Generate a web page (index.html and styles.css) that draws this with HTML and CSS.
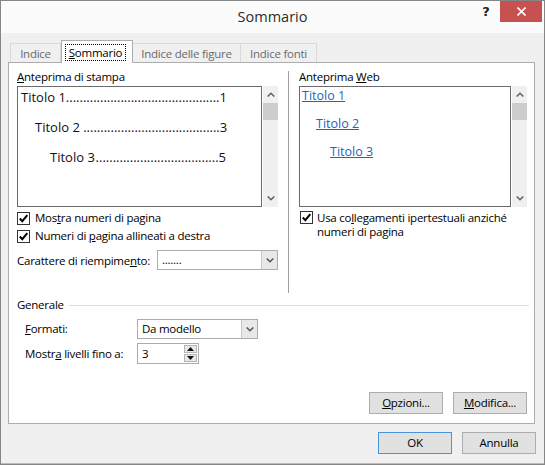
FILE: index.html
```html
<!DOCTYPE html>
<html lang="it">
<head>
<meta charset="utf-8">
<title>Sommario</title>
<link rel="stylesheet" href="styles.css">
</head>
<body>
<div class="window">
  <div class="titlebar">
    <div></div>
    <div class="title">Sommario</div>
    <div class="controls">
      <span class="help">?</span>
      <span class="close"><svg width="9" height="9" viewBox="0 0 9 9"><path d="M0.5 0.5 L8.5 8.5 M8.5 0.5 L0.5 8.5" stroke="#fff" stroke-width="1.6" fill="none"/></svg></span>
    </div>
  </div>
  <div class="client">
    <div class="tabs">
      <div class="tab t-indice">Indice</div>
      <div class="tab t-sommario active"><span class="focus"><u>S</u>ommario</span></div>
      <div class="tab t-figure">Indice delle figure</div>
      <div class="tab t-fonti">Indice fonti</div>
    </div>
    <div class="panel">
      <div class="top">
        <div class="col left">
          <div class="label"><u>A</u>nteprima di stampa</div>
          <div class="preview">
            <div class="list print">
              <div class="toc"><span>Titolo 1</span><span class="dots">.............................................</span><span>1</span></div>
              <div class="toc lv2"><span>Titolo 2&nbsp;</span><span class="dots">........................................</span><span>3</span></div>
              <div class="toc lv3"><span>Titolo 3</span><span class="dots">....................................</span><span>5</span></div>
            </div>
            <div class="scrollbar">
              <span class="sb-btn"><svg width="8" height="5" viewBox="0 0 8 5"><polyline points="0.7,4.5 4,1.2 7.3,4.5" fill="none" stroke="#606060" stroke-width="1.5"/></svg></span>
              <span class="sb-thumb"></span>
              <span class="sb-track"></span>
              <span class="sb-btn"><svg width="8" height="5" viewBox="0 0 8 5"><polyline points="0.7,0.5 4,3.8 7.3,0.5" fill="none" stroke="#606060" stroke-width="1.5"/></svg></span>
            </div>
          </div>
          <div class="check first">
            <span class="box"><svg width="11" height="11" viewBox="0 0 11 11"><polyline points="1.8,5.5 4.3,8.2 9.3,2.2" fill="none" stroke="#000" stroke-width="2"/></svg></span>
            <span>Mos<u>t</u>ra numeri di pagina</span>
          </div>
          <div class="check">
            <span class="box"><svg width="11" height="11" viewBox="0 0 11 11"><polyline points="1.8,5.5 4.3,8.2 9.3,2.2" fill="none" stroke="#000" stroke-width="2"/></svg></span>
            <span>Numeri di <u>p</u>agina allineati a destra</span>
          </div>
          <div class="fill-row">
            <span>Carattere di riempime<u>n</u>to:</span>
            <div class="combo">
              <span class="combo-val">.......</span>
              <span class="combo-btn"><svg width="8" height="5" viewBox="0 0 8 5"><polyline points="0.7,0.5 4,3.8 7.3,0.5" fill="none" stroke="#555" stroke-width="1.5"/></svg></span>
            </div>
          </div>
        </div>
        <div class="vsep"></div>
        <div class="col right">
          <div class="label">Anteprima <u>W</u>eb</div>
          <div class="preview">
            <div class="list web">
              <a class="link">Titolo 1</a>
              <a class="link lv2">Titolo 2</a>
              <a class="link lv3">Titolo 3</a>
            </div>
            <div class="scrollbar">
              <span class="sb-btn"><svg width="8" height="5" viewBox="0 0 8 5"><polyline points="0.7,4.5 4,1.2 7.3,4.5" fill="none" stroke="#606060" stroke-width="1.5"/></svg></span>
              <span class="sb-thumb"></span>
              <span class="sb-track"></span>
              <span class="sb-btn"><svg width="8" height="5" viewBox="0 0 8 5"><polyline points="0.7,0.5 4,3.8 7.3,0.5" fill="none" stroke="#606060" stroke-width="1.5"/></svg></span>
            </div>
          </div>
          <div class="check wrap">
            <span class="box"><svg width="11" height="11" viewBox="0 0 11 11"><polyline points="1.8,5.5 4.3,8.2 9.3,2.2" fill="none" stroke="#000" stroke-width="2"/></svg></span>
            <span>Usa co<u>l</u>legamenti ipertestuali anziché<br>numeri di pagina</span>
          </div>
        </div>
      </div>
      <div class="general">
        <div class="group-title"><span>Generale</span><span class="rule"></span></div>
        <div class="fields">
          <span class="flabel"><u>F</u>ormati:</span>
          <div class="combo">
            <span class="combo-val">Da modello</span>
            <span class="combo-btn"><svg width="8" height="5" viewBox="0 0 8 5"><polyline points="0.7,0.5 4,3.8 7.3,0.5" fill="none" stroke="#555" stroke-width="1.5"/></svg></span>
          </div>
          <span class="flabel">Mostr<u>a</u> livelli fino a:</span>
          <div class="spin">
            <span class="spin-val">3</span>
            <span class="spin-btns">
              <span class="spin-b"><svg width="7" height="4" viewBox="0 0 7 4"><polygon points="3.5,0 7,4 0,4" fill="#111"/></svg></span>
              <span class="spin-b"><svg width="7" height="4" viewBox="0 0 7 4"><polygon points="0,0 7,0 3.5,4" fill="#111"/></svg></span>
            </span>
          </div>
        </div>
      </div>
      <div class="panel-buttons">
        <button class="btn"><u>O</u>pzioni...</button>
        <button class="btn"><u>M</u>odifica...</button>
      </div>
    </div>
    <div class="footer">
      <button class="btn default">OK</button>
      <button class="btn">Annulla</button>
    </div>
  </div>
</div>
</body>
</html>
```

FILE: styles.css
```css
* { box-sizing: border-box; }
html, body { margin: 0; padding: 0; }
body {
  width: 545px;
  height: 465px;
  font-family: "Open Sans", "Noto Sans", sans-serif;
  font-size: 11.5px;
  letter-spacing: -0.25px;
  color: #000;
  background: #f0f0f0;
}
u { text-decoration: underline; text-underline-offset: 1px; }

.window {
  width: 545px;
  height: 465px;
  border: 1px solid #858585;
  background: #f0f0f0;
  display: flex;
  flex-direction: column;
  box-shadow: inset 0 -1px 0 #bcbcbc;
}

/* title bar */
.titlebar {
  height: 32px;
  background: #fbfbfb;
  display: grid;
  grid-template-columns: 1fr auto 1fr;
}
.title {
  font-size: 14.5px;
  letter-spacing: 0;
  color: #2b2b2b;
  line-height: 32px;
}
.controls {
  justify-self: end;
  display: flex;
  align-items: flex-start;
}
.help {
  width: 22px;
  height: 21px;
  margin-right: 3px;
  font-family: "DejaVu Sans", sans-serif;
  font-weight: bold;
  font-size: 13px;
  color: #222;
  line-height: 22px;
  text-align: center;
}
.close {
  width: 42px;
  height: 21px;
  margin-right: 2px;
  background: #c75050;
  display: flex;
  align-items: center;
  justify-content: center;
}

/* client */
.client {
  flex: 1;
  padding: 7px 9px 0 7px;
  display: flex;
  flex-direction: column;
}
.tabs {
  height: 22px;
  padding-left: 2px;
  display: flex;
  align-items: flex-end;
}
.tab {
  height: 19px;
  border: 1px solid #d9d9d9;
  border-bottom: 0;
  color: #6a6a6a;
  line-height: 17px;
  display: flex;
  justify-content: center;
  align-items: center;
  white-space: nowrap;
}
.t-indice { width: 51px; }
.t-sommario { width: 72px; }
.t-figure { width: 108px; border-left: 0; }
.t-fonti { width: 76px; border-left: 0; }
.tab.active {
  height: 23px;
  margin-bottom: -1px;
  background: #fff;
  border-color: #adadad;
  color: #000;
  position: relative;
  z-index: 1;
  align-items: flex-start;
  padding-top: 3px;
  padding-right: 3px;
}
.focus {
  border: 1px dotted #000;
  height: 17px;
  line-height: 15px;
  padding: 0 3px;
}

/* panel */
.panel {
  height: 362px;
  background: #fff;
  border: 1px solid #adadad;
  display: flex;
  flex-direction: column;
}
.top {
  height: 230px;
  display: grid;
  grid-template-columns: 279px 1px 1fr;
}
.col.left { padding: 6px 10px 0 8px; }
.col.right { padding: 6px 5px 0 10px; }
.vsep {
  background: #a0a0a0;
  margin-top: 8px;
}
.label {
  height: 16px;
  line-height: 16px;
  margin-bottom: 1px;
}
.preview {
  display: flex;
  gap: 1px;
  height: 121px;
}
.list {
  height: 121px;
  border: 1px solid #6b6b6b;
  background: #fff;
}
.list.print {
  width: 245px;
  padding: 0 35px 0 3px;
  font-size: 13px;
  letter-spacing: 0;
  color: #111;
}
.toc {
  display: flex;
  line-height: 20px;
  margin-bottom: 10px;
  white-space: nowrap;
}
.toc .dots {
  margin-left: auto;
}
.toc.lv2 { padding-left: 14px; }
.toc.lv3 { padding-left: 29px; }

.list.web {
  width: 212px;
  padding: 0 0 0 2px;
  display: flex;
  flex-direction: column;
  align-items: flex-start;
  gap: 10px;
  font-size: 12.5px;
  letter-spacing: 0;
}
.link {
  color: #1f64bd;
  text-decoration: underline;
  line-height: 18px;
}
.link.lv2 { margin-left: 14px; }
.link.lv3 { margin-left: 28px; }

.scrollbar {
  width: 15px;
  height: 121px;
  background: #f0f0f0;
  display: flex;
  flex-direction: column;
}
.sb-btn {
  height: 17px;
  display: flex;
  align-items: center;
  justify-content: center;
}
.sb-thumb {
  height: 17px;
  background: #cdcdcd;
}
.sb-track { flex: 1; }

/* checkboxes */
.check {
  display: flex;
  align-items: center;
  gap: 5px;
  height: 18px;
  line-height: 18px;
  white-space: nowrap;
}
.check.first { margin-top: 2px; }
.check.wrap {
  margin-top: 4px;
  height: auto;
  line-height: 14px;
  align-items: flex-start;
  padding-left: 1px;
  gap: 4px;
}
.box {
  width: 13px;
  height: 13px;
  border: 1px solid #333;
  background: #fff;
  display: flex;
  align-items: center;
  justify-content: center;
  flex: none;
}

/* combos */
.fill-row {
  margin-top: 5px;
  display: flex;
  align-items: center;
  justify-content: space-between;
  height: 20px;
}
.combo {
  width: 121px;
  height: 20px;
  border: 1px solid #acacac;
  background: #fff;
  display: flex;
}
.combo-val {
  flex: 1;
  padding-left: 4px;
  line-height: 18px;
  white-space: nowrap;
}
.combo-btn {
  width: 16px;
  background: #e8e8e8;
  border-left: 1px solid #c8c8c8;
  display: flex;
  align-items: center;
  justify-content: center;
}

/* general */
.general {
  padding: 4px 5px 0 8px;
}
.group-title {
  display: flex;
  align-items: center;
  height: 16px;
  line-height: 16px;
}
.rule {
  flex: 1;
  height: 1px;
  background: #dcdcdc;
  margin-left: 5px;
}
.fields {
  margin-top: 6px;
  padding-left: 8px;
  display: grid;
  grid-template-columns: 112px auto;
  justify-content: start;
  align-items: center;
  row-gap: 4px;
}
.flabel { line-height: 18px; white-space: nowrap; }
.spin {
  width: 62px;
  height: 21px;
  border: 1px solid #acacac;
  background: #fff;
  display: flex;
}
.spin-val {
  flex: 1;
  padding-left: 4px;
  line-height: 19px;
}
.spin-btns {
  width: 15px;
  padding: 1px;
  display: flex;
  flex-direction: column;
  gap: 1px;
}
.spin-b {
  flex: 1;
  background: #e8e8e8;
  border: 1px solid #b5b5b5;
  display: flex;
  align-items: center;
  justify-content: center;
}

/* buttons */
.panel-buttons {
  margin-top: auto;
  padding: 0 7px 9px 0;
  display: flex;
  justify-content: flex-end;
  gap: 10px;
}
.btn {
  width: 74px;
  height: 22px;
  border: 1px solid #adadad;
  background: #e1e1e1;
  font-family: "Open Sans", "Noto Sans", sans-serif;
  font-size: 11.5px;
  letter-spacing: -0.25px;
  color: #000;
  padding: 0;
  line-height: 20px;
}
.btn.default { border-color: #4a94dc; }
.footer {
  padding: 8px 0 0 0;
  margin-right: -1px;
  display: flex;
  justify-content: flex-end;
  gap: 10px;
}
```
